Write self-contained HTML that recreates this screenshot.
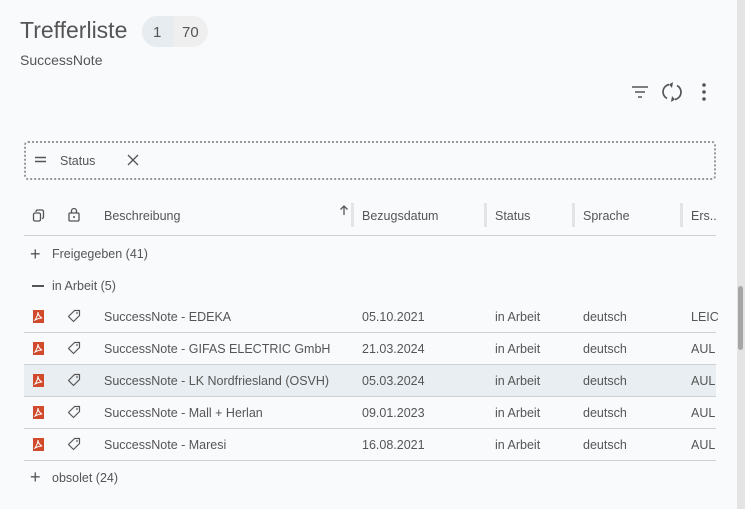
<!DOCTYPE html>
<html><head><meta charset="utf-8"><style>
*{box-sizing:border-box;margin:0;padding:0}
body{width:745px;height:509px;overflow:hidden;background:#f9fafc;font-family:"Liberation Sans",sans-serif;color:#555;position:relative}
.a{position:absolute;white-space:nowrap}
.t{font-size:12.5px;color:#555;margin-top:1px}
.line{position:absolute;left:24px;width:692px;height:1px;background:#cfd2d4}
.div{position:absolute;top:203px;width:3px;height:24px;background:#e2e4e6}
svg{position:absolute}
</style></head><body>
<div class="a" style="left:20px;top:17px;font-size:23px;color:#555">Trefferliste</div>
<div class="a" style="left:142px;top:16px;width:66px;height:31px;border-radius:16px;background:#efefef;overflow:hidden">
 <div style="position:absolute;left:0;top:0;width:32px;height:31px;background:#e6ecef"></div>
 <div class="a" style="left:11px;top:8px;font-size:15px;color:#555">1</div>
 <div class="a" style="left:40px;top:8px;font-size:15px;color:#555">70</div>
</div>
<div class="a" style="left:20px;top:52px;font-size:14px;color:#555">SuccessNote</div>

<svg style="left:630px;top:82px" width="20" height="20" viewBox="0 0 20 20"><path d="M2 5h16M5 10h10M8 15h4" stroke="#555" stroke-width="1.6"/></svg>
<svg style="left:661px;top:80px" width="22" height="24" viewBox="0 0 22 24"><path d="M8 4.5A7.5 7.5 0 0 0 6 18.5M14 19.5A7.5 7.5 0 0 0 16 5.5" fill="none" stroke="#555" stroke-width="1.7"/><path d="M12 2l-4 2.5 3 3.5z M10 22l4-2.5-3-3.5z" fill="#555"/></svg>
<svg style="left:700px;top:82px" width="8" height="20" viewBox="0 0 8 20"><circle cx="4" cy="3" r="1.8" fill="#555"/><circle cx="4" cy="10" r="1.8" fill="#555"/><circle cx="4" cy="17" r="1.8" fill="#555"/></svg>

<div class="a" style="left:24px;top:141px;width:692px;height:39px;border:2px dotted #999;border-radius:4px"></div>
<svg style="left:34px;top:155px" width="13" height="10"><path d="M1 2.5h11M1 6.5h11" stroke="#555" stroke-width="1.6"/></svg>
<div class="a t" style="left:60px;top:153px">Status</div>
<svg style="left:126px;top:153px" width="14" height="14"><path d="M2 2l10 10M12 2L2 12" stroke="#555" stroke-width="1.3"/></svg>

<svg style="left:32px;top:209px" width="13" height="13"><rect x="1.5" y="4" width="7" height="8" rx="1.5" fill="none" stroke="#555" stroke-width="1.3"/><path d="M4 3V2.5A1.5 1.5 0 0 1 5.5 1H10A1.5 1.5 0 0 1 11.5 2.5V8A1.5 1.5 0 0 1 10 9.5" fill="none" stroke="#555" stroke-width="1.3"/></svg>
<svg style="left:67px;top:207px" width="14" height="16"><rect x="2" y="6" width="10" height="8" rx="1" fill="none" stroke="#555" stroke-width="1.3"/><path d="M4.5 6V4a2.5 2.5 0 0 1 5 0v2" fill="none" stroke="#555" stroke-width="1.3"/><circle cx="7" cy="10" r="1" fill="#555"/></svg>
<div class="a t" style="left:104px;top:208px">Beschreibung</div>
<svg style="left:339px;top:204px" width="10" height="12"><path d="M5 11V2M1.5 5.5L5 2l3.5 3.5" fill="none" stroke="#555" stroke-width="1.3"/></svg>
<div class="div" style="left:351px"></div>
<div class="a t" style="left:362px;top:208px">Bezugsdatum</div>
<div class="div" style="left:484px"></div>
<div class="a t" style="left:495px;top:208px">Status</div>
<div class="div" style="left:572px"></div>
<div class="a t" style="left:583px;top:208px">Sprache</div>
<div class="div" style="left:680px"></div>
<div class="a t" style="left:691px;top:208px">Ers..</div>
<div class="line" style="top:235px"></div>

<div class="a" style="left:30px;top:244px;font-size:18px;color:#555;font-weight:300">+</div>
<div class="a t" style="left:52px;top:246px">Freigegeben (41)</div>
<div class="a" style="left:32px;top:285px;width:12px;height:1.5px;background:#555"></div>
<div class="a t" style="left:52px;top:278px">in Arbeit (5)</div>

<div class="a" style="left:24px;top:365px;width:692px;height:31px;background:#e8eef1"></div>

<div class="a t" style="left:104px;top:309px">SuccessNote - EDEKA</div><div class="a t" style="left:362px;top:309px">05.10.2021</div><div class="a t" style="left:495px;top:309px">in Arbeit</div><div class="a t" style="left:583px;top:309px">deutsch</div><div class="a t" style="left:691px;top:309px">LEIC</div>
<div class="a t" style="left:104px;top:341px">SuccessNote - GIFAS ELECTRIC GmbH</div><div class="a t" style="left:362px;top:341px">21.03.2024</div><div class="a t" style="left:495px;top:341px">in Arbeit</div><div class="a t" style="left:583px;top:341px">deutsch</div><div class="a t" style="left:691px;top:341px">AUL</div>
<div class="a t" style="left:104px;top:373px">SuccessNote - LK Nordfriesland (OSVH)</div><div class="a t" style="left:362px;top:373px">05.03.2024</div><div class="a t" style="left:495px;top:373px">in Arbeit</div><div class="a t" style="left:583px;top:373px">deutsch</div><div class="a t" style="left:691px;top:373px">AUL</div>
<div class="a t" style="left:104px;top:405px">SuccessNote - Mall + Herlan</div><div class="a t" style="left:362px;top:405px">09.01.2023</div><div class="a t" style="left:495px;top:405px">in Arbeit</div><div class="a t" style="left:583px;top:405px">deutsch</div><div class="a t" style="left:691px;top:405px">AUL</div>
<div class="a t" style="left:104px;top:437px">SuccessNote - Maresi</div><div class="a t" style="left:362px;top:437px">16.08.2021</div><div class="a t" style="left:495px;top:437px">in Arbeit</div><div class="a t" style="left:583px;top:437px">deutsch</div><div class="a t" style="left:691px;top:437px">AUL</div>

<div class="line" style="top:332px"></div>
<div class="line" style="top:364px"></div>
<div class="line" style="top:396px"></div>
<div class="line" style="top:428px"></div>
<div class="line" style="top:460px"></div>

<svg style="left:33px;top:310px" width="11" height="13"><rect width="11" height="13" fill="#d04a2b"/><path d="M2 10c2-3 3-6 3-8 0 3 2 5 4 6-3 0-5 1-7 2z" fill="none" stroke="#fff" stroke-width="1"/></svg>
<svg style="left:33px;top:342px" width="11" height="13"><rect width="11" height="13" fill="#d04a2b"/><path d="M2 10c2-3 3-6 3-8 0 3 2 5 4 6-3 0-5 1-7 2z" fill="none" stroke="#fff" stroke-width="1"/></svg>
<svg style="left:33px;top:374px" width="11" height="13"><rect width="11" height="13" fill="#d04a2b"/><path d="M2 10c2-3 3-6 3-8 0 3 2 5 4 6-3 0-5 1-7 2z" fill="none" stroke="#fff" stroke-width="1"/></svg>
<svg style="left:33px;top:406px" width="11" height="13"><rect width="11" height="13" fill="#d04a2b"/><path d="M2 10c2-3 3-6 3-8 0 3 2 5 4 6-3 0-5 1-7 2z" fill="none" stroke="#fff" stroke-width="1"/></svg>
<svg style="left:33px;top:438px" width="11" height="13"><rect width="11" height="13" fill="#d04a2b"/><path d="M2 10c2-3 3-6 3-8 0 3 2 5 4 6-3 0-5 1-7 2z" fill="none" stroke="#fff" stroke-width="1"/></svg>

<svg style="left:67px;top:309px" width="14" height="14"><path d="M7.5 1.5h5v5l-6 6-5-5z" fill="none" stroke="#555" stroke-width="1.2" stroke-linejoin="round"/><circle cx="10" cy="4" r="0.9" fill="#555"/></svg>
<svg style="left:67px;top:341px" width="14" height="14"><path d="M7.5 1.5h5v5l-6 6-5-5z" fill="none" stroke="#555" stroke-width="1.2" stroke-linejoin="round"/><circle cx="10" cy="4" r="0.9" fill="#555"/></svg>
<svg style="left:67px;top:373px" width="14" height="14"><path d="M7.5 1.5h5v5l-6 6-5-5z" fill="none" stroke="#555" stroke-width="1.2" stroke-linejoin="round"/><circle cx="10" cy="4" r="0.9" fill="#555"/></svg>
<svg style="left:67px;top:405px" width="14" height="14"><path d="M7.5 1.5h5v5l-6 6-5-5z" fill="none" stroke="#555" stroke-width="1.2" stroke-linejoin="round"/><circle cx="10" cy="4" r="0.9" fill="#555"/></svg>
<svg style="left:67px;top:437px" width="14" height="14"><path d="M7.5 1.5h5v5l-6 6-5-5z" fill="none" stroke="#555" stroke-width="1.2" stroke-linejoin="round"/><circle cx="10" cy="4" r="0.9" fill="#555"/></svg>

<div class="a" style="left:30px;top:467px;font-size:18px;color:#555;font-weight:300">+</div>
<div class="a t" style="left:52px;top:470px">obsolet (24)</div>

<div class="a" style="left:737px;top:0;width:8px;height:509px;background:#e4e4e4"></div>
<div class="a" style="left:738px;top:286px;width:5px;height:64px;border-radius:3px;background:#a6a6a6"></div>
</body></html>
